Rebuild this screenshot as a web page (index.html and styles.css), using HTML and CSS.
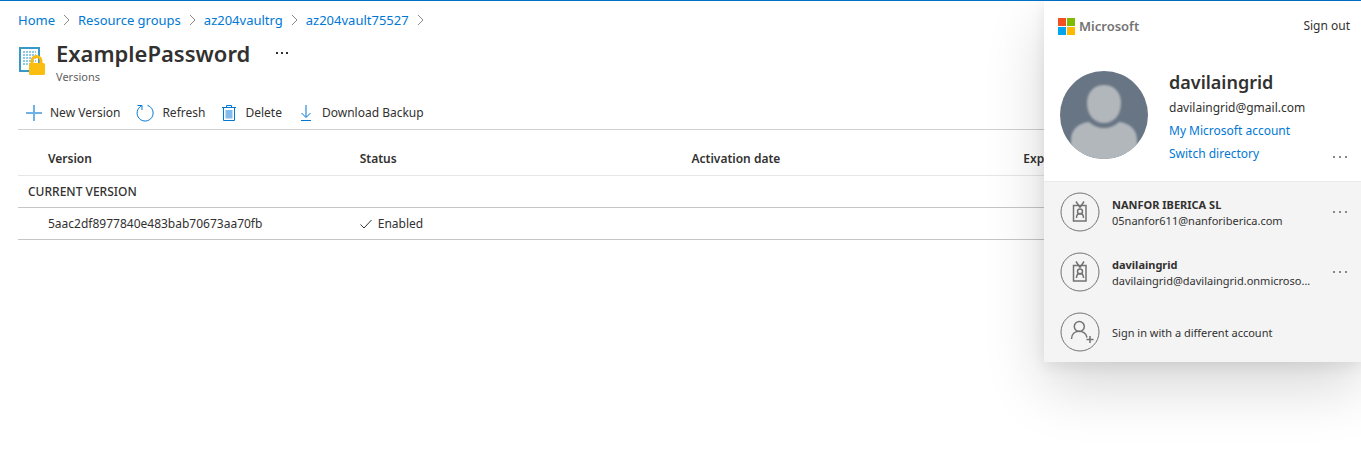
FILE: index.html
```html
<!DOCTYPE html>
<html lang="en">
<head>
<meta charset="utf-8">
<title>ExamplePassword - Versions</title>
<link rel="stylesheet" href="styles.css">
</head>
<body>
<main class="blade">
  <nav class="breadcrumb" aria-label="Breadcrumb">
    <a href="#">Home</a>
    <svg class="chevron" viewBox="0 0 7 12"><path d="M1 1l5 5-5 5"/></svg>
    <a href="#">Resource groups</a>
    <svg class="chevron" viewBox="0 0 7 12"><path d="M1 1l5 5-5 5"/></svg>
    <a href="#">az204vaultrg</a>
    <svg class="chevron" viewBox="0 0 7 12"><path d="M1 1l5 5-5 5"/></svg>
    <a href="#">az204vault75527</a>
    <svg class="chevron" viewBox="0 0 7 12"><path d="M1 1l5 5-5 5"/></svg>
  </nav>

  <header class="heading">
    <svg class="heading-icon" viewBox="0 0 28 30">
      <path fill="#fff" stroke="#3999c6" stroke-width="2" d="M2 3h19v23H2z"/>
      <path stroke="#8fcbe6" stroke-width="2" stroke-dasharray="2 1" d="M5 7h13M5 10h13M5 13h13M5 16h13M5 19h13"/>
      <path stroke="#fcb90f" stroke-width="3" d="M14 19v-3a4.500 4.500 0 0 1 9 0v3"/>
      <rect x="11" y="18" width="16" height="12" rx="1.500" fill="#fcbd11"/>
    </svg>
    <div class="heading-text">
      <h1>ExamplePassword</h1>
      <p>Versions</p>
    </div>
    <button class="more more-title" type="button" aria-label="More actions"><svg viewBox="0 0 16 4"><path d="M2 1h2v2H2zM7 1h2v2H7zM12 1h2v2h-2z"/></svg></button>
  </header>

  <div class="toolbar" role="toolbar">
    <button type="button"><svg viewBox="0 0 16 16"><path stroke="#6fb2e8" stroke-width="2" d="M8 0v16M0 8h16"/></svg>New Version</button>
    <button type="button"><svg class="wide" viewBox="0 0 18 18"><path d="M11.500 1.400A8 8 0 1 1 5.500 1.900M1.500 1.500h4.500v4.500"/></svg>Refresh</button>
    <button type="button"><svg viewBox="0 0 16 16"><path d="M1 2.500h14M5.500 2V.500h5V2M2.500 3v12.500h11V3"/><path class="solid" d="M4.500 5h7v8.500h-7z"/></svg>Delete</button>
    <button type="button"><svg viewBox="0 0 16 16"><path d="M8 0v12M3.500 8L8 12.500 12.500 8M3 15.500h10"/></svg>Download Backup</button>
  </div>

  <table class="versions">
    <thead>
      <tr><th scope="col">Version</th><th scope="col">Status</th><th scope="col">Activation date</th><th scope="col">Expiration date</th></tr>
    </thead>
    <tbody>
      <tr class="group"><th colspan="4" scope="rowgroup">CURRENT VERSION</th></tr>
      <tr>
        <td>5aac2df8977840e483bab70673aa70fb</td>
        <td><span class="status"><svg viewBox="0 0 12 12"><path d="M.500 6.500L4 10l7.500-8"/></svg>Enabled</span></td>
        <td></td>
        <td></td>
      </tr>
    </tbody>
  </table>
</main>

<aside class="account" aria-label="Account">
  <div class="account-top">
    <div class="brand">
      <svg viewBox="0 0 17 17"><path fill="#f25022" d="M0 0h8v8H0z"/><path fill="#7fba00" d="M9 0h8v8H9z"/><path fill="#00a4ef" d="M0 9h8v8H0z"/><path fill="#ffb900" d="M9 9h8v8H9z"/></svg>
      Microsoft
    </div>
    <a class="sign-out" href="#">Sign out</a>
  </div>
  <div class="profile">
    <svg class="avatar" viewBox="0 0 88 88">
      <defs><clipPath id="disc"><circle cx="44" cy="44" r="44"/></clipPath></defs>
      <g clip-path="url(#disc)">
        <path fill="#687584" d="M0 0h88v88H0z"/>
        <g class="figure">
          <path d="M44 14c10 0 17 7 17 18 0 12-7 20-17 20s-17-8-17-20c0-11 7-18 17-18z"/>
          <path d="M29 51c9 8 21 8 30 0 10 1 18 7 18 18v22H11V69c0-11 8-17 18-18z"/>
        </g>
      </g>
    </svg>
    <div class="profile-text">
      <h2>davilaingrid</h2>
      <span>davilaingrid@gmail.com</span>
      <a href="#">My Microsoft account</a>
      <a href="#">Switch directory</a>
    </div>
    <button class="more" type="button" aria-label="Account options"><svg viewBox="0 0 16 4"><path d="M0 1h2v2H0zM6 1h2v2H6zM12 1h2v2h-2z"/></svg></button>
  </div>
  <ul class="others">
    <li>
      <svg class="badge" viewBox="0 0 40 40"><circle cx="20" cy="20" r="19"/><path class="bold" d="M13.500 13.500h12.500v15.500H13.500zM16 9.500l4 6M24 9.500l-4 6M16.500 26c0-6 7-6 7 0"/><circle class="bold" cx="20" cy="19.500" r="2.500"/></svg>
      <div class="other-text"><strong>NANFOR IBERICA SL</strong><span>05nanfor611@nanforiberica.com</span></div>
      <button class="more" type="button" aria-label="Account options"><svg viewBox="0 0 16 4"><path d="M0 1h2v2H0zM6 1h2v2H6zM12 1h2v2h-2z"/></svg></button>
    </li>
    <li>
      <svg class="badge" viewBox="0 0 40 40"><circle cx="20" cy="20" r="19"/><path class="bold" d="M13.500 13.500h12.500v15.500H13.500zM16 9.500l4 6M24 9.500l-4 6M16.500 26c0-6 7-6 7 0"/><circle class="bold" cx="20" cy="19.500" r="2.500"/></svg>
      <div class="other-text"><strong>davilaingrid</strong><span>davilaingrid@davilaingrid.onmicroso...</span></div>
      <button class="more" type="button" aria-label="Account options"><svg viewBox="0 0 16 4"><path d="M0 1h2v2H0zM6 1h2v2H6zM12 1h2v2h-2z"/></svg></button>
    </li>
    <li>
      <svg class="badge" viewBox="0 0 40 40"><circle cx="20" cy="20" r="19"/><circle class="bold" cx="19.300" cy="14.500" r="5"/><path class="bold" d="M11.500 27c0-10 14-10 15.500-1.500M26.500 27.500h7M30 24v7"/></svg>
      <a class="other-text" href="#">Sign in with a different account</a>
    </li>
  </ul>
</aside>
</body>
</html>
```
FILE: styles.css
```css
* { box-sizing: border-box; }

body {
  margin: 0;
  min-height: 100vh;
  border-top: 1px solid #0072c6;
  background: #fff;
  color: #323130;
  font: 12px/20px "Noto Sans", "Open Sans", sans-serif;
  overflow-x: hidden;
}

a { color: #0078d4; text-decoration: none; }
button { border: 0; padding: 0; background: none; color: inherit; font: inherit; cursor: pointer; }
svg { display: block; flex: none; fill: none; }
h1, h2, p, ul { margin: 0; padding: 0; }

.blade { padding: 9px 16px 0 18px; }

.breadcrumb { display: flex; align-items: center; gap: 8px; font-size: 13px; }
.chevron { width: 7px; height: 12px; stroke: #8a8886; }

.heading { display: flex; align-items: flex-start; gap: 10px; padding-top: 7px; }
.heading-icon { width: 28px; height: 30px; margin-top: 8px; }
.heading h1 { font-size: 22px; line-height: 32px; font-weight: 600; }
.heading p { font-size: 11px; line-height: 16px; color: #605e5c; }
.more svg { width: 16px; height: 4px; fill: #8a8886; }
.more-title { margin: 14px 0 0 14px; }
.more-title svg { fill: #323130; }

.toolbar {
  display: flex;
  align-items: center;
  gap: 16px;
  height: 45px;
  padding: 11px 8px 0;
  border-bottom: 1px solid #d2d0ce;
}
.toolbar button { display: flex; align-items: center; gap: 8px; }
.toolbar svg { width: 16px; height: 16px; stroke: #0078d4; }
.toolbar .wide { width: 18px; height: 18px; }
.toolbar .solid { fill: #83bbec; stroke: none; }

.versions { width: 100%; table-layout: fixed; border-collapse: separate; border-spacing: 0; text-align: left; }
.versions th, .versions td { height: 32px; padding: 1px 10px 0; border-bottom: 1px solid #c8c6c4; }
.versions th:first-child, .versions td:first-child { padding-left: 30px; }
.versions thead th { height: 46px; padding-top: 12px; font-weight: 600; border-color: #e6e6e6; }
.versions .group th { padding-left: 10px; font-size: 12px; font-weight: 500; }
.status { display: flex; align-items: center; gap: 6px; }
.status svg { width: 12px; height: 12px; stroke: #323130; }

.account {
  position: absolute;
  top: 1px;
  right: 0;
  width: 317px;
  background: #fff;
  box-shadow: 0 24px 56px rgba(0, 0, 0, .16), 0 4px 14px rgba(0, 0, 0, .08);
}
.account-top { display: flex; justify-content: space-between; align-items: center; height: 50px; padding: 0 11px 0 14px; }
.brand { display: flex; align-items: center; gap: 4px; color: #737373; font-size: 13px; font-weight: 600; }
.brand svg { width: 17px; height: 17px; }
.sign-out { color: inherit; }
.profile { display: flex; gap: 21px; padding: 18px 12px 16px 16px; }
.avatar { width: 88px; height: 88px; margin: 2px 0; }
.figure { fill: #b2b7bc; filter: blur(1px); }
.profile-text { display: flex; flex-direction: column; flex: 1; line-height: 23px; }
.profile-text h2 { font-size: 18px; line-height: 27px; font-weight: 600; }
.profile .more { align-self: flex-end; margin-bottom: 6px; }
.others { list-style: none; background: #f4f4f4; border-top: 1px solid #eaeaea; }
.others li { display: flex; align-items: center; gap: 12px; height: 60px; padding: 0 12px 0 16px; }
.badge { width: 40px; height: 40px; stroke: #737373; }
.badge .bold { stroke-width: 1.500; }
.other-text { display: flex; flex-direction: column; flex: 1; padding-top: 1px; color: inherit; font-size: 11px; line-height: 16px; white-space: nowrap; }
.other-text strong { font-weight: 700; }
```
